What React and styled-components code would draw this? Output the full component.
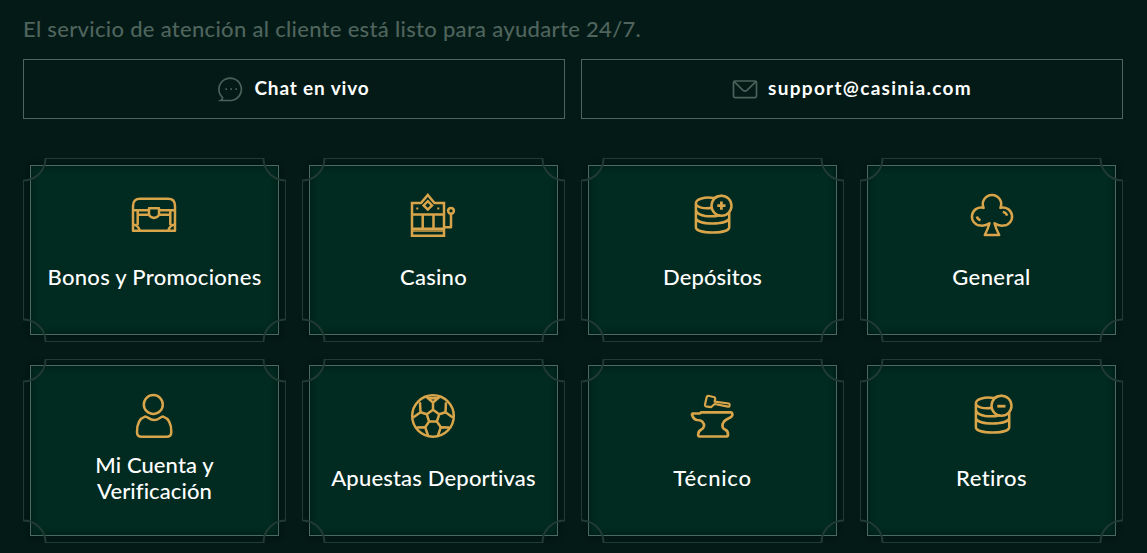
import React from 'react';

import styled, { createGlobalStyle } from 'styled-components';

const GlobalStyle = createGlobalStyle`
    * {
        box-sizing: border-box;
    }

    body {
        margin: 0;
        background: #031a16;
        color: #fff;
        font-family: Lato, 'Liberation Sans', sans-serif;
        overflow: hidden;
    }
`;

const Page = styled.main`
    height: 553px;
    padding: 15px 24px 0 23px;
    overflow: hidden;
`;

const Intro = styled.p`
    margin: 0 0 16px;
    color: #4f645d;
    font-size: 22px;
    font-weight: 500;
    line-height: 28px;
    letter-spacing: 0.31px;
    white-space: nowrap;
`;

const Contacts = styled.div`
    display: grid;
    grid-template-columns: 1fr 1fr;
    gap: 16px;
    margin-bottom: 39px;
`;

const ContactButton = styled.a`
    display: flex;
    align-items: center;
    justify-content: center;
    gap: 10px;
    height: 60px;
    padding-bottom: 1px;
    border: 1px solid #4b665e;
    color: #fff;
    font-size: 19px;
    font-weight: 700;
    letter-spacing: ${({ $spacing }) => $spacing};
    text-decoration: none;

    svg {
        width: 26px;
        height: 26px;
        fill: none;
        stroke: #4b625a;
        stroke-width: 1.7;
    }

    span {
        padding-bottom: 2px;
    }
`;

const Topics = styled.div`
    display: grid;
    grid-template-columns: repeat(4, 1fr);
    grid-auto-rows: 184px;
    gap: 17px 16px;
`;

const CardBody = styled.div`
    flex: 1;
    display: flex;
    flex-direction: column;
    align-items: center;
    padding-top: 26px;
    border: 1px solid #4a6a60;
    background: #012a20;
    box-shadow: inset 0 0 6px #021a15, 0 0 5px #01130f;
`;

const TopicIcon = styled.svg`
    flex: none;
    width: 47px;
    height: 48px;
    fill: none;
    stroke: #d9a54a;
    stroke-width: 2.5;
    stroke-linejoin: round;
`;

const Label = styled.div`
    display: flex;
    align-items: center;
    justify-content: center;
    height: 52px;
    margin-top: 11px;
    font-size: 22px;
    font-weight: 500;
    line-height: 26px;
    letter-spacing: ${({ $spacing }) => $spacing};
    text-align: center;
    white-space: pre-line;
`;

const TopicCard = styled.a`
    position: relative;
    display: flex;
    padding: 7px;
    color: #fff;
    text-decoration: none;

    &:nth-child(n + 5) {
        padding-top: 6px;
    }

    &:nth-child(n + 5) ${Label} {
        margin-top: 12px;
    }
`;

const Frame = styled.svg`
    position: absolute;
    inset: 0;
    width: 263px;
    height: 184px;
    fill: none;
    stroke: #213a33;
    pointer-events: none;
`;

const ChatIcon = () => (
    <svg viewBox="0 0 26 26">
        <path d="M4.5 21.5A11.2 11.2 0 1 1 13 24.5H2.8Q4.6 23.5 4.5 21.5Z" />
        <path d="M7.4 13.2h1.6M12.4 13.2H14M17.4 13.2H19" />
    </svg>
);

const MailIcon = () => (
    <svg viewBox="0 0 26 26">
        <rect x="1.5" y="5" width="23" height="16.6" rx="1.5" />
        <path d="M2 5.3l8.8 8.8q2.2 2 4.4 0L24 5.3" />
    </svg>
);

const Chest = () => (
    <>
        <path d="M2 38.8V14Q2 6.8 9 6.8H37Q44 6.8 44 14V38.8Z" />
        <path d="M2 18.3H17.5M28.5 18.3H44M6.7 22.7H17.5M28.5 22.7H39.3M6.7 18.3V33M39.3 18.3V33M2 32.5Q7.5 33 8.5 38.8M44 32.5Q38.5 33 37.5 38.8" />
        <path d="M18 16.2H28V22.5Q27.5 25 23 26Q18.5 25 18 22.5Z" />
    </>
);

const SlotMachine = () => (
    <>
        <path strokeLinejoin="miter" d="M2 11H11L17.8 3L24.5 11H34V43.8H2ZM2 22.5H34M2 36.8H34M12.7 22.5V36.8M23.5 22.5V36.8" />
        <path strokeLinejoin="miter" d="M17.8 9.2L22 13.4L17.8 17.6L13.6 13.4Z" />
        <path strokeWidth="2" d="M6.3 16.4h2M27.3 16.4h2" />
        <path strokeWidth="1.5" d="M2 39H34" />
        <circle cx="41" cy="18.8" r="2.9" />
        <path d="M41 21.8V35.3H34" />
    </>
);

const Coins = ({ sign }) => (
    <>
        <path d="M24.5 6C16 4.5 7 7 6.9 11.3C7 15.5 15 17.2 23.8 15.8M6.9 11.3V35.5C8 42.2 39.2 42.2 40.2 35.5V20.5" />
        <path d="M6.9 18C8 24.5 22 25.5 31 23.2M6.9 26.5C9 33 38 33 40.2 26.5" />
        <path strokeWidth="1.8" d="M24 6Q28 3.3 33 3.6" />
        <circle cx="32.5" cy="13.7" r="10" />
        <path strokeWidth="2.8" d={sign === 'plus' ? 'M28.3 13.7H36.5M32.4 9.6V17.8' : 'M28.3 14.2H36.5'} />
    </>
);

const Club = () => (
    <>
        <path d="M21.5 31.3Q17.5 34.2 12.5 33.6A9.05 9.05 0 1 1 15.6 15.9A9.2 9.2 0 1 1 32.4 15.9A9.05 9.05 0 1 1 35.5 33.6Q30.5 34.2 26.5 31.3Q28 37 31.2 43H16.8Q20 37 21.5 31.3Z" />
        <path d="M8.9 24.6Q9.5 27.5 12.5 28.3M34.8 19.9Q38.2 20.6 39.2 23.7" />
    </>
);

const Person = () => (
    <>
        <circle cx="22.3" cy="12.5" r="9.5" />
        <path d="M14 24.6C8 26.5 6 33 6 40Q6 44.8 10.7 44.8H35.6Q40.3 44.8 40.3 40C40.3 33 38.5 26.5 32.2 24.6C29.5 24.3 28 28 23.2 28C18.2 28 16.7 24.3 14 24.6Z" />
    </>
);

const Football = () => (
    <>
        <circle cx="23" cy="24" r="20.8" />
        <path d="M23 17.8L29.2 22.3L26.9 29.5H19.1L16.8 22.3ZM23 17.8V10.5M29.2 22.3L35.5 20.2M26.9 29.5L30.8 35.2M19.1 29.5L15.2 35.2M16.8 22.3L10.5 20.2" />
        <path d="M16 4.6L23 10.5L30 4.6M17.5 6.2H28.5M35.5 20.2L36 10.2M35.5 20.2L42.8 25.5M30.8 35.2L39.5 35.5M30.8 35.2L28 43.5M15.2 35.2L6.5 35.5M15.2 35.2L18 43.5M10.5 20.2L10 10.2M10.5 20.2L3.2 25.5" />
    </>
);

const Anvil = () => (
    <>
        <path strokeWidth="2.7" d="M12 20.3H41.5Q43.5 20.3 43.3 23.3C42.5 26.2 38 26 35 29.5C32.5 32.8 33 36.5 36.5 37.8Q39.2 39 39 43Q38.8 44.5 37 44.5H10.5Q9 44.5 9.2 42.5C9.3 39.5 10 38.8 12 37.8C15.5 36 16 32.5 13.5 29.8Q11.5 28 8 28Q4.5 27.2 3 22.7Q3 21.3 4.5 21.5H11Z" />
        <path strokeWidth="2.2" d="M19.3 3.8L25.5 5.2Q26.5 5.6 26.2 7L25.6 9.6L39.8 11.5Q41 12 40.6 13.6Q40.2 15 39 14.7L25.6 12L22 15.2L16.6 14.3Q15.6 14 16 12.5L17.8 4.8Q18.2 3.6 19.3 3.8Z" />
    </>
);

const topics = [
    { label: 'Bonos y Promociones', spacing: '0.3px', icon: <Chest /> },
    { label: 'Casino', spacing: '0.25px', icon: <SlotMachine /> },
    { label: 'Depósitos', spacing: '0.1px', icon: <Coins sign="plus" /> },
    { label: 'General', spacing: '0.4px', icon: <Club /> },
    { label: 'Mi Cuenta y\nVerificación', spacing: '0.1px', icon: <Person /> },
    { label: 'Apuestas Deportivas', spacing: '0.18px', icon: <Football /> },
    { label: 'Técnico', spacing: '0.75px', icon: <Anvil /> },
    { label: 'Retiros', spacing: '0.45px', icon: <g transform="translate(1 0)"><Coins sign="minus" /></g> },
];

function Topic({ label, icon, spacing }) {
    return (
        <TopicCard>
            <CardBody>
                <TopicIcon viewBox="0 0 47 48">{icon}</TopicIcon>
                <Label $spacing={spacing}>{label}</Label>
            </CardBody>
            <Frame viewBox="0 0 263 184">
                <path d="M22.5 .5H240.5M22.5 183.5H240.5M.5 22.5V161.5M262.5 22.5V161.5" />
                <path strokeWidth="2" d="M22.5 0A22 22 0 0 1 0 22.5M240.5 0A22 22 0 0 0 263 22.5M0 161.5A22 22 0 0 1 22.5 184M263 161.5A22 22 0 0 0 240.5 184" />
            </Frame>
        </TopicCard>
    );
}

export default function App() {
    return (
        <Page>
            <GlobalStyle />
            <Intro>El servicio de atención al cliente está listo para ayudarte 24/7.</Intro>
            <Contacts>
                <ContactButton $spacing="0.85px"><ChatIcon /><span>Chat en vivo</span></ContactButton>
                <ContactButton $spacing="1.3px"><MailIcon /><span>support@casinia.com</span></ContactButton>
            </Contacts>
            <Topics>
                {topics.map((topic) => <Topic key={topic.label} {...topic} />)}
            </Topics>
        </Page>
    );
}
